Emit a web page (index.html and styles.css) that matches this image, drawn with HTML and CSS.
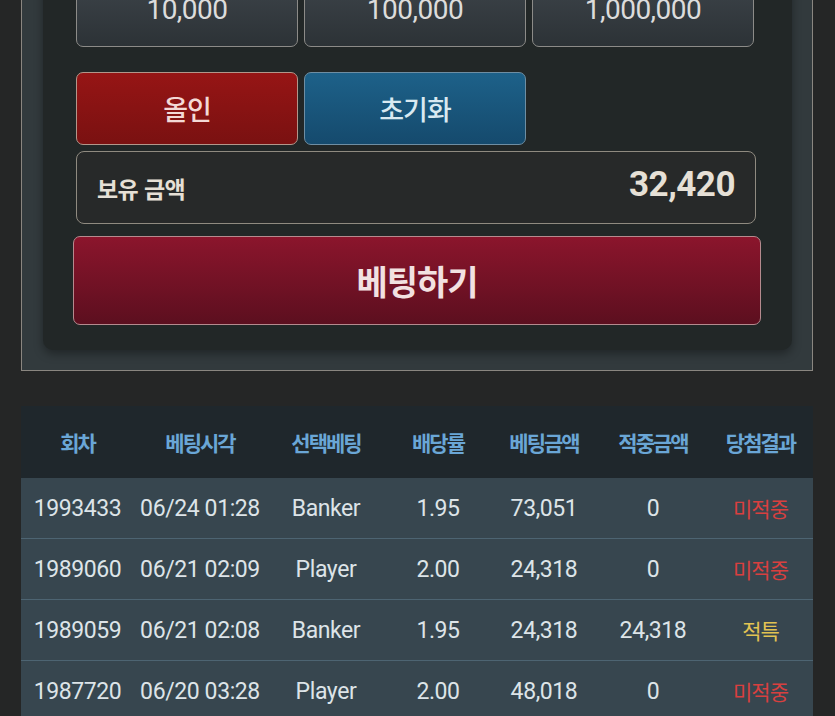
FILE: index.html
```html
<!DOCTYPE html>
<html lang="ko">
<head>
<meta charset="utf-8">
<link rel="stylesheet" href="styles.css">
</head>
<body>
<div class="page">
  <section class="outer">
    <div class="inner">
      <div class="chips">
        <button class="chip">10,000</button>
        <button class="chip">100,000</button>
        <button class="chip">1,000,000</button>
      </div>
      <div class="actions">
        <button class="act allin">올인</button>
        <button class="act reset">초기화</button>
      </div>
      <div class="balance">
        <span class="bal-label">보유 금액</span>
        <span class="bal-value">32,420</span>
      </div>
      <button class="bet">베팅하기</button>
    </div>
  </section>

  <table class="history">
    <colgroup>
      <col class="c1"><col class="c2"><col class="c3"><col class="c4"><col class="c5"><col class="c6"><col class="c7">
    </colgroup>
    <thead>
      <tr>
        <th>회차</th><th>베팅시각</th><th>선택베팅</th><th>배당률</th><th>베팅금액</th><th>적중금액</th><th>당첨결과</th>
      </tr>
    </thead>
    <tbody>
      <tr><td>1993433</td><td>06/24 01:28</td><td>Banker</td><td>1.95</td><td>73,051</td><td>0</td><td class="lose">미적중</td></tr>
      <tr><td>1989060</td><td>06/21 02:09</td><td>Player</td><td>2.00</td><td>24,318</td><td>0</td><td class="lose">미적중</td></tr>
      <tr><td>1989059</td><td>06/21 02:08</td><td>Banker</td><td>1.95</td><td>24,318</td><td>24,318</td><td class="tie">적특</td></tr>
      <tr><td>1987720</td><td>06/20 03:28</td><td>Player</td><td>2.00</td><td>48,018</td><td>0</td><td class="lose">미적중</td></tr>
    </tbody>
  </table>
</div>
</body>
</html>
```

FILE: styles.css
```css
html, body {
  margin: 0;
  padding: 0;
  background: #252626;
  overflow: hidden;
}

.page {
  width: 792px;
  margin: -67px 0 0 21px;
  font-family: Roboto, "Noto Sans CJK KR", sans-serif;
}

.outer {
  background: #323a3d;
  border: 1px solid #8a8680;
  padding: 20px 20px 20px 21px;
}

.inner {
  background: #222727;
  border-radius: 10px;
  padding: 20px 36px 25px 33px;
  box-shadow: 0 4px 10px rgba(0, 0, 0, 0.35);
}

button {
  font-family: Roboto, "Noto Sans CJK KR", sans-serif;
  cursor: pointer;
  box-sizing: border-box;
}

.chips,
.actions {
  display: grid;
  grid-template-columns: repeat(3, 222px);
  column-gap: 6px;
}

.chip {
  height: 73px;
  border: 1px solid #8c8b88;
  border-radius: 7px;
  background: linear-gradient(#3e454b, #2c3236);
  color: #dcdcdc;
  font-size: 28px;
  font-weight: 400;
  letter-spacing: -0.5px;
  padding-bottom: 4px;
}

.actions {
  margin-top: 25px;
}

.act {
  height: 73px;
  border-radius: 7px;
  font-family: "Noto Sans CJK KR", sans-serif;
  font-size: 27px;
  font-weight: 500;
  letter-spacing: -1px;
}

.allin {
  border: 1px solid #b3968a;
  background: linear-gradient(#961515, #7a1111);
  color: #f3d9d6;
}

.reset {
  border: 1px solid #6e8ea3;
  background: linear-gradient(#1d6189, #154a6d);
  color: #d9e9f1;
}

.balance {
  margin-top: 6px;
  height: 73px;
  box-sizing: border-box;
  border: 1px solid #8f8a80;
  border-radius: 8px;
  background: #272929;
  display: flex;
  align-items: center;
  justify-content: space-between;
  padding: 0 20px 0 20px;
  color: #e6e0d6;
}

.bal-label {
  font-family: "Noto Sans CJK KR", sans-serif;
  font-size: 23px;
  font-weight: 700;
  letter-spacing: -0.6px;
  margin-top: 0;
}

.bal-value {
  font-size: 35px;
  font-weight: 700;
  letter-spacing: -0.5px;
  margin-top: -6px;
}

.bet {
  display: block;
  width: calc(100% + 8px);
  margin: 12px -5px 0 -3px;
  height: 89px;
  border: 1px solid #b58a8e;
  border-radius: 7px;
  background: linear-gradient(#8b152c, #5c0f1f);
  color: #f2e1e1;
  font-family: "Noto Sans CJK KR", sans-serif;
  font-size: 34px;
  font-weight: 700;
  letter-spacing: -1px;
}

.history {
  margin-top: 35px;
  width: 792px;
  border-collapse: collapse;
  table-layout: fixed;
}

.c1 { width: 113px; }
.c2 { width: 132px; }
.c3 { width: 120px; }
.c4 { width: 104px; }
.c5 { width: 108px; }
.c6 { width: 110px; }
.c7 { width: 105px; }

.history th {
  height: 72px;
  padding: 0;
  background: #1f272c;
  color: #6aa6d6;
  font-family: "Noto Sans CJK KR", sans-serif;
  font-size: 21px;
  font-weight: 700;
  letter-spacing: -2px;
  text-align: center;
  vertical-align: middle;
}

.history td {
  height: 60px;
  padding: 0;
  background: #37464f;
  color: #dde4e8;
  font-size: 23px;
  font-weight: 400;
  letter-spacing: -0.4px;
  text-align: center;
  vertical-align: middle;
}

.history tbody tr + tr td {
  border-top: 1px solid #4d6472;
}

.history td.lose,
.history td.tie {
  font-family: "Noto Sans CJK KR", sans-serif;
  font-size: 21px;
  letter-spacing: -1px;
}

.history td.lose { color: #d8403f; }
.history td.tie { color: #e2c352; }
```
